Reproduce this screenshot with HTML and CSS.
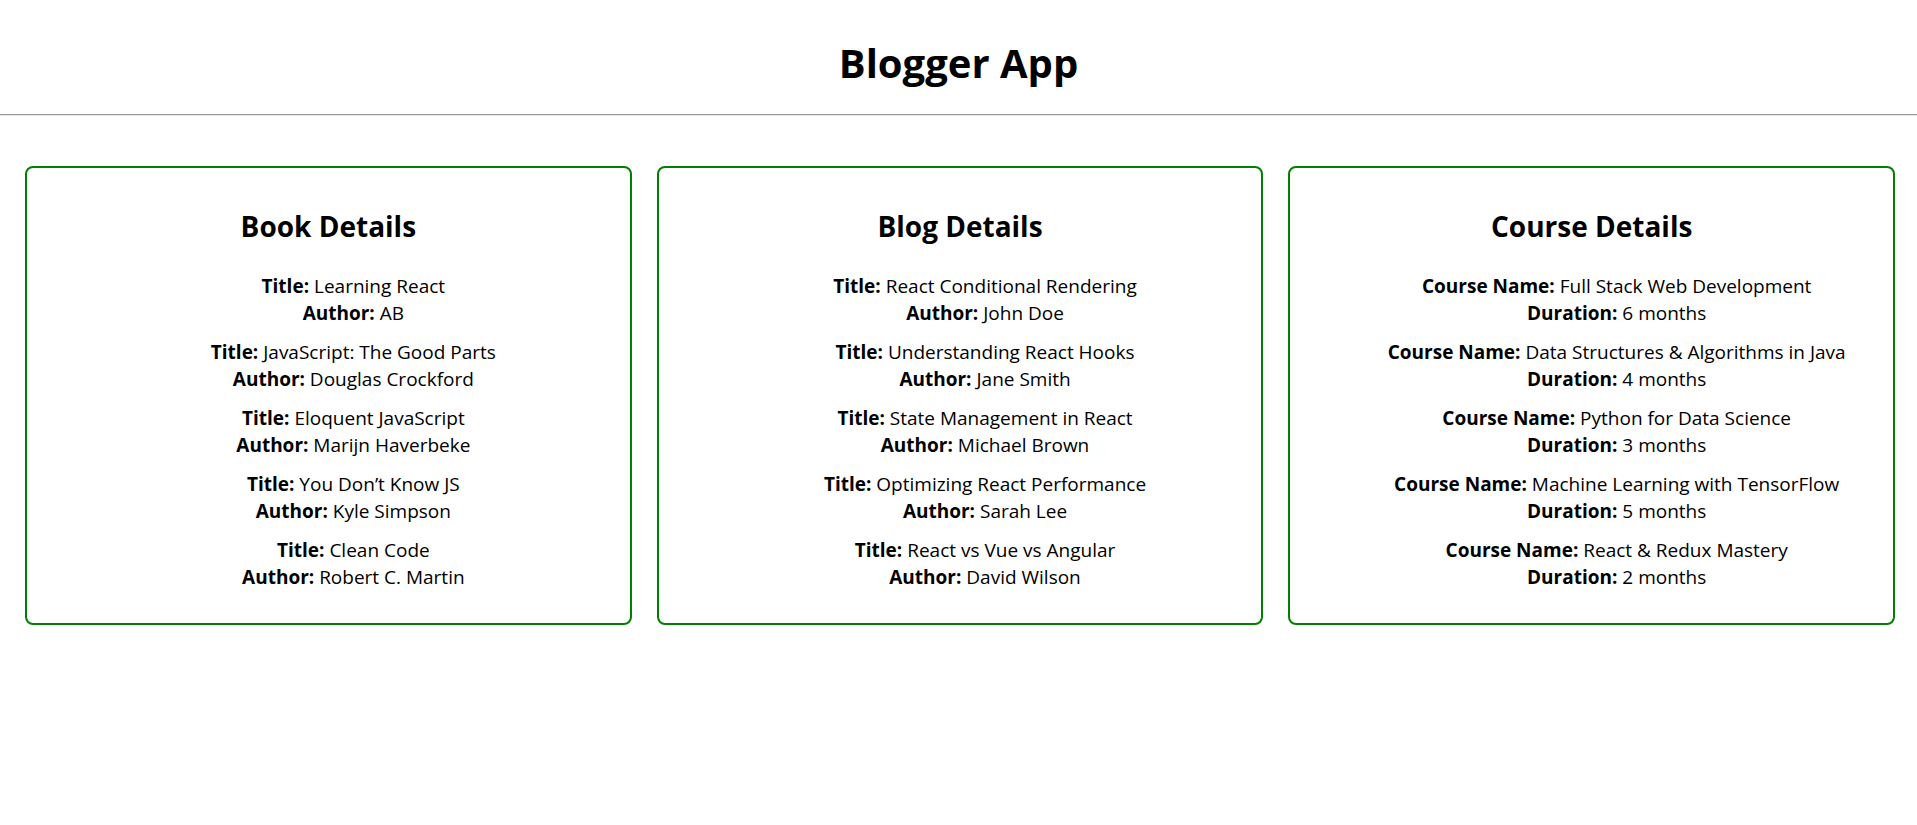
FILE: index.html
```html
<!DOCTYPE html>
<html lang="en">
<head>
<meta charset="utf-8">
<title>Blogger App</title>
<link rel="stylesheet" href="styles.css">
</head>
<body>
<header class="app-header">
  <h1 class="app-title">Blogger App</h1>
</header>
<hr class="divider">
<main class="cards">
  <section class="card">
    <h2 class="card-title">Book Details</h2>
    <ul class="item-list">
      <li class="item"><div><b>Title:</b> Learning React</div><div><b>Author:</b> AB</div></li>
      <li class="item"><div><b>Title:</b> JavaScript: The Good Parts</div><div><b>Author:</b> Douglas Crockford</div></li>
      <li class="item"><div><b>Title:</b> Eloquent JavaScript</div><div><b>Author:</b> Marijn Haverbeke</div></li>
      <li class="item"><div><b>Title:</b> You Don’t Know JS</div><div><b>Author:</b> Kyle Simpson</div></li>
      <li class="item"><div><b>Title:</b> Clean Code</div><div><b>Author:</b> Robert C. Martin</div></li>
    </ul>
  </section>
  <section class="card">
    <h2 class="card-title">Blog Details</h2>
    <ul class="item-list">
      <li class="item"><div><b>Title:</b> React Conditional Rendering</div><div><b>Author:</b> John Doe</div></li>
      <li class="item"><div><b>Title:</b> Understanding React Hooks</div><div><b>Author:</b> Jane Smith</div></li>
      <li class="item"><div><b>Title:</b> State Management in React</div><div><b>Author:</b> Michael Brown</div></li>
      <li class="item"><div><b>Title:</b> Optimizing React Performance</div><div><b>Author:</b> Sarah Lee</div></li>
      <li class="item"><div><b>Title:</b> React vs Vue vs Angular</div><div><b>Author:</b> David Wilson</div></li>
    </ul>
  </section>
  <section class="card">
    <h2 class="card-title">Course Details</h2>
    <ul class="item-list">
      <li class="item"><div><b>Course Name:</b> Full Stack Web Development</div><div><b>Duration:</b> 6 months</div></li>
      <li class="item"><div><b>Course Name:</b> Data Structures &amp; Algorithms in Java</div><div><b>Duration:</b> 4 months</div></li>
      <li class="item"><div><b>Course Name:</b> Python for Data Science</div><div><b>Duration:</b> 3 months</div></li>
      <li class="item"><div><b>Course Name:</b> Machine Learning with TensorFlow</div><div><b>Duration:</b> 5 months</div></li>
      <li class="item"><div><b>Course Name:</b> React &amp; Redux Mastery</div><div><b>Duration:</b> 2 months</div></li>
    </ul>
  </section>
</main>
</body>
</html>
```

FILE: styles.css
```css
html, body {
  margin: 0;
  padding: 0;
  background: #ffffff;
  color: #000000;
  font-family: "Open Sans", "Noto Sans", "Liberation Sans", sans-serif;
}

.app-header {
  text-align: center;
  padding-top: 38px;
  padding-bottom: 26px;
}

.app-title {
  margin: 0;
  font-size: 40px;
  line-height: 50px;
  font-weight: 700;
}

.divider {
  margin: 0;
  height: 0;
  border: 0;
  border-top: 1px solid #9b9b9b;
  border-bottom: 1px solid #e6e6e6;
}

.cards {
  display: flex;
  gap: 25px;
  padding: 50px 22px 0 25px;
}

.card {
  flex: 1 1 0;
  border: 2px solid #008000;
  border-radius: 8px;
  padding: 20px;
  text-align: center;
  font-size: 19px;
  line-height: 27px;
}

.card-title {
  margin: 20px 0 28.6px;
  font-size: 28px;
  line-height: 36px;
  font-weight: 700;
}

.item-list {
  list-style: none;
  margin: 0;
  padding: 0 0 0 50px;
}

.item {
  margin: 12px 0;
}

.item:first-child {
  margin-top: 0;
}

.item b {
  font-weight: 700;
}
```
